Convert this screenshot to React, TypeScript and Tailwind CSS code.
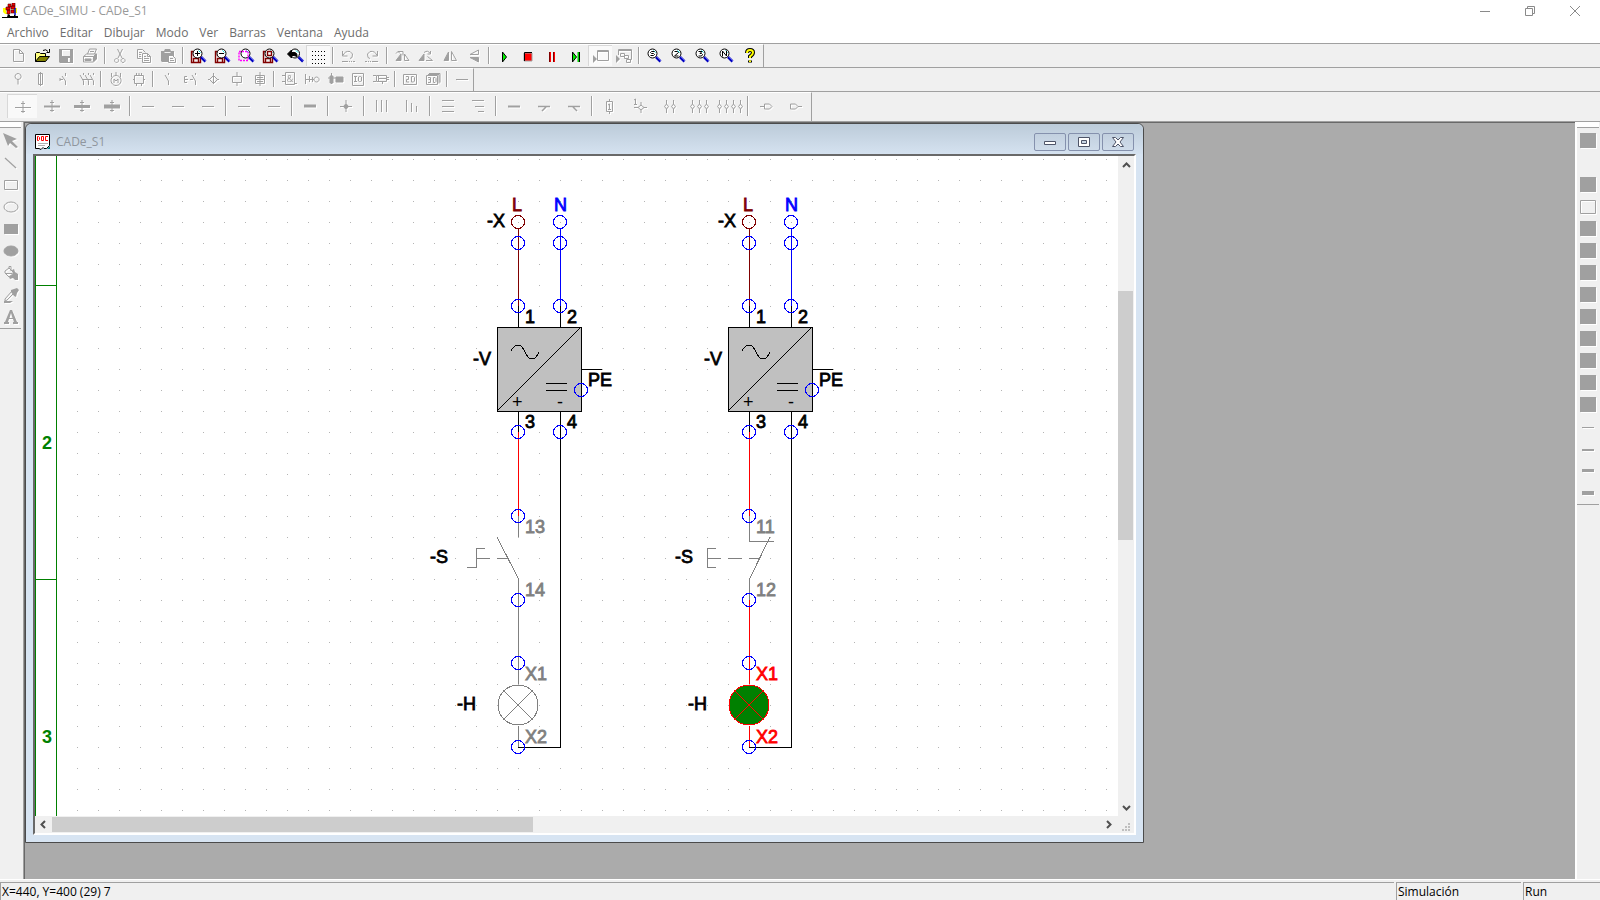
import type { ReactNode } from 'react';
import clsx from 'clsx';

const GREY = '#a0a0a0';

type Tool = { name: string; icon?: ReactNode; active?: boolean; color?: boolean };

const Lens = ({ cx = 7.5, children }: { cx?: number; children?: ReactNode }) => (
   <>
      <path d={`M${cx + 3.5} 9l4.5 4.5`} stroke="#0000c0" strokeWidth="2.6" />
      <path d={`M${cx + 4.5} 9l4 4`} stroke="#8080ff" strokeWidth="0.7" />
      <circle cx={cx} cy="5.5" r="4.5" stroke="#000" fill="#fff" />
      <path d={`M${cx + 1} 2.5l2 2`} stroke="#00e0e0" />
      {children}
   </>
);

// the lens with a sheet mark or number inside
const LensMark = ({ d }: { d: string }) => (
   <Lens cx={6.5}>
      <path d={d} stroke="#000" />
   </Lens>
);

const MaroonPage = () => (
   <path d="M1.5 3.5v11h9v-11zM3.5 14.5v-4h5v4M3.5 3.5v4h6" stroke="#800000" strokeWidth="1.4" fill="#fff" />
);

const fileTools: Tool[][] = [
   [
      { name: 'Nuevo', icon: <path d="M3.5 1.5h6l4 4v8h-10zM9.5 1.5v4h4" /> },
      { name: 'Abrir', color: true, icon: <>
         <path d="M1.5 13.5V5.5l1-1h3l1 1h5v3" fill="#ffff80" stroke="#000" />
         <path d="M1.500 13.500l4-5h10l-4 5z" fill="#808000" stroke="#000" />
         <path d="M9 2.500q3-2 5 1M15.500 1v3.500h-3" stroke="#000" />
      </> },
      { name: 'Guardar', icon: <path d="M1 1h14v14H2l-1-1zM4 2v6h8V2zM10 10v4h2v-4z" fill={GREY} fillRule="evenodd" stroke="none" /> },
      { name: 'Imprimir', icon: <>
         <path d="M5.5 6l2-5h7l-2 5M8 3.5h4M1.5 8.5l3-2.5h10v5l-3 3h-10zM1.5 8.5h10v5M11.5 8.5l3-2.5" />
         <path d="M3 11h6v1.500H3zM12 8l2-2v5l-2 2z" fill={GREY} />
      </> },
   ],
   [
      { name: 'Cortar', icon: <path d="M5.500 1l4.500 9M10.500 1L6 10M4.500 10.500a2 2 0 1 0 .1 0zM11 10.500a2 2 0 1 0 .1 0z" /> },
      { name: 'Copiar', icon: <>
         <path d="M1.500 1.500h5l3 3M1.500 1.500v9h4M3 4.500h3M3 6.500h2M3 8.500h2" />
         <path d="M6.500 5.500h5l3 3v6h-8zM11.500 5.500v3h3M8 8.500h2M8 10.500h5M8 12.500h5" />
      </> },
      { name: 'Pegar', icon: <>
         <path d="M1 3h3l1-2h5l1 2h3v5H8v6H2l-1-1z" fill={GREY} stroke="none" />
         <path d="M4.500 4.500h6" stroke="#f0f0f0" />
         <path d="M8.500 7.500h4l3 3v4h-7zM10 10.500h3M10 12.500h4" />
      </> },
   ],
   [
      { name: 'Aumentar', color: true, icon: <><MaroonPage /><Lens><path d="M5 5.500h5M7.500 3v5" stroke="#000" /></Lens></> },
      { name: 'Reducir', color: true, icon: <><MaroonPage /><Lens><path d="M5 5.500h5" stroke="#000" /></Lens></> },
      { name: 'Zoom ventana', color: true, icon: <><Lens /><path d="M1 3.500h9v9H1z" stroke="#ff00ff" strokeWidth="1.400" strokeDasharray="2 1" /></> },
      { name: 'Zoom página', color: true, icon: <><MaroonPage /><Lens><path d="M5.500 3.500h4v4h-4z" stroke="#800000" strokeWidth="1.400" /></Lens></> },
      { name: 'Zoom anterior', color: true, icon: <><Lens cx={9} /><path d="M1.500 6l4-4v2.500q6-1 5.500 4L8 7.500H5.500V10z" fill="#000" stroke="#000" /></> },
      { name: 'Rejilla', color: true, active: true, icon: <path d="M1 3.500h15M1 7.500h15M1 11.500h15M1 15.500h15" stroke="#000" strokeDasharray="1 2" /> },
   ],
   [
      { name: 'Deshacer', icon: <path d="M2.500 3v5h5M3 7.500q2-5 7-4q4 2 2 6l-2 1M2 13.500h6M9 13.500h1M11 13.500h1M13 13.500h2" /> },
      { name: 'Rehacer', icon: <path d="M13.500 3v5h-5M13 7.500q-2-5-7-4q-4 2-2 6l2 1M14 13.500H8M7 13.500H6M5 13.500H4M3 13.500H1" /> },
   ],
   [
      { name: 'Girar izquierda', icon: <><path d="M2 12.500h5V6z" fill={GREY} /><path d="M10.500 12.500V6l4.500 6.500zM4 3.500h5v4M2 5.500l2-2 2 2" /></> },
      { name: 'Girar derecha', icon: <><path d="M1 12.500h5V6z" fill={GREY} /><path d="M8 12.500h6.500l-5-4M6 4.500q4-3 6 1M12.500 3v3h-3" /></> },
      { name: 'Espejo horizontal', icon: <><path d="M2 12.500h4.500V4z" fill={GREY} /><path d="M9.500 3.500v9h5z" /></> },
      { name: 'Espejo vertical', icon: <><path d="M12.500 2v4.500H4z" /><path d="M12.500 14V9.500H4z" fill={GREY} /></> },
   ],
   [
      { name: 'Simular', color: true, icon: <path d="M6.500 4v10l4-5z" fill="#00f000" stroke="#000" /> },
      { name: 'Parar', color: true, icon: <><path d="M4 5h8v8H4z" fill="#f00" /><path d="M4.500 13V4.500H12" stroke="#000" /></> },
      { name: 'Pausa', color: true, icon: <><path d="M6 4v10M10 4v10" stroke="#800000" strokeWidth="2" /><path d="M6.500 4v10M10.500 4v10" stroke="#f00" /></> },
      { name: 'Paso', color: true, icon: <><path d="M4.500 4v10l4-5z" fill="#00f000" stroke="#000" /><path d="M10.500 4v10" stroke="#00d000" strokeWidth="2" /><path d="M11.500 4v10" stroke="#000" /></> },
      { name: 'Ventana de simulación', active: true, icon: <><path d="M4.500 2.500h11v10h-11zM4 3.500h12" /><path d="M0 7v8l4-4z" fill={GREY} stroke="none" /></> },
      { name: 'Ventanas de simulación', icon: <><path d="M2.500 7V1.500h13v10h-4M2 2.500h14M4.500 5.500h4v3h-4zM8.500 7.500h4v3h-4zM10.500 11.500h4v3h-4z" /><path d="M0 7v8l4-4z" fill={GREY} stroke="none" /></> },
   ],
   [
      { name: 'Zoom S', color: true, icon: <LensMark d="M8.500 3.500h-3l-1 1 1 1h2l1 1-1 1H4.500" /> },
      { name: 'Zoom 2', color: true, icon: <LensMark d="M4.500 3.500h3l1 1-4 3.500h4" /> },
      { name: 'Zoom 3', color: true, icon: <LensMark d="M4.500 3.500h3.500l-2 2h1.500l1 1-1 1.500h-3" /> },
      { name: 'Zoom N', color: true, icon: <LensMark d="M4.500 8.500v-5.500l4 5v-5.500" /> },
      { name: 'Ayuda', color: true, icon: <>
         <path d="M5 5q0-3 3-3t3 2.500q0 2-3 4V10M8 12.500v2" stroke="#000" strokeWidth="4" />
         <path d="M5 5q0-3 3-3t3 2.500q0 2-3 4V10M8 12.500v1.500" stroke="#ff0" strokeWidth="2" />
      </> },
   ],
];

const partTools: Tool[][] = [
   [
      { name: 'Alimentación', icon: <path d="M8 2.500a3 3 0 1 0 .1 0zM8 8.500v5" /> },
      { name: 'Fusibles', icon: <path d="M5.500 2.500h4v11h-4zM7.500 1v14" /> },
      { name: 'Seccionadores', icon: <path d="M9.500 2v3M9.500 14v-4L6 5M4 8.500h3M4 7v3" /> },
      { name: 'Interruptores', icon: <path d="M4.500 14v-4L1 4M9.500 14v-4L6 4M14.500 14v-4L11 4M4.500 2v2M9.500 2v2M14.500 2v2M3 8.500h10" /> },
   ],
   [
      { name: 'Motores', icon: <><path d="M8 4.500a5 5 0 1 0 .1 0zM3.500 2v4M8 1v3M12.500 2v4" /><path d="M6 12V8l2 2 2-2v4" /></> },
      { name: 'Electrónica', icon: <path d="M3.500 4.500h9v8h-9zM5.500 2v2M8 2v2M10.500 2v2M5.500 13v2M10.500 13v2M2 8.500h2M12 8.500h2" /> },
   ],
   [
      { name: 'Contactos', icon: <path d="M8.500 2v2M8.500 14v-4L5 4" /> },
      { name: 'Pulsadores', icon: <path d="M12.500 2v2M12.500 14v-4L9 4M4 5.500H1.500v6H4M1 8.500h4M7 8.500h3" /> },
      { name: 'Detectores', icon: <path d="M7.500 4.500l4 4-4 4-4-4zM7.500 2v11M4 8.500H2M11 8.500h2" /> },
      { name: 'Bobinas', icon: <path d="M3.500 5.500h9v6h-9zM8 1v4M8 12v3" /> },
      { name: 'Señalización', icon: <path d="M3.500 4.500h9v8h-9zM8 1v14M5 6.500h6M5 10.500h6M3 8.500h10" /> },
   ],
   [
      { name: 'Lógica', icon: <><path d="M4.500 1.500h9v12h-9zM1 4.500h3M1 10.500h3M14 12.500h2" /><text x="9" y="11" fontSize="9" textAnchor="middle" fill={GREY} stroke="none">&amp;</text></> },
      { name: 'Neumática', icon: <path d="M1.500 3v10M5.500 5v6M1 8.500h9M8.500 6v5M12.500 6a2.500 2.500 0 1 0 .1 0z" /> },
      { name: 'Conectores', icon: <><path d="M1 7h14M4.500 2v11" /><path d="M3 5h3v7H3zM9 6h7v5H9z" fill={GREY} /></> },
      { name: 'Entradas y salidas', icon: <><path d="M2.500 2.500h11v12h-11z" /><path d="M4 5.500h3M5.500 5.500v5M4 10.500h3M8.500 6v4l1 .5h1l1-.5V6l-1-.5h-1z" /></> },
      { name: 'Cables', icon: <path d="M3.500 4.500h10v6h-10zM5.500 4v7M0 4.500h3M0 10.500h3M13 6.500h3M13 8.500h3M6 7.500h7M9.500 11v2" /> },
   ],
   [
      { name: 'Vista 2D', icon: <><path d="M1.500 3.500h13v10h-13z" /><path d="M4 5.500h2.500v3H4.500v2.500H7M9.500 5.500v5.500h2l1-1V6.500l-1-1z" /></> },
      { name: 'Vista 3D', icon: <><path d="M1.500 4.500h11v9h-11zM3 3.500h11v9M4 2.500h11v9" /><path d="M3 6.500h2.500v5H3M3.500 8.500h2M8.500 6.500v5h1.500l1-1v-3l-1-1z" /></> },
   ],
   [{ name: 'Hilo', icon: <path d="M2 8.500h12" /> }],
];

const crossing = (w: number) => (
   <>
      <path d="M0 8.500h16" strokeWidth={w} />
      <path d="M8 2v12M6 4.500h4M6 12.500h4" />
   </>
);
const thin = <path d="M2 8.500h12" />;
// small terminals drawn side by side
const terminals = (xs: number[]) => (
   <>{xs.map((x) => <path key={x} d={`M${x} 2v4l-2 2.500 2 2.500v4M${x} 6l2 2.500-2 2.500`} />)}</>
);

const wireTools: Tool[][] = [
   [
      { name: 'Cruce 1', active: true, icon: crossing(1) },
      { name: 'Cruce 2', icon: crossing(2) },
      { name: 'Cruce 3', icon: crossing(3) },
      { name: 'Cruce 4', icon: crossing(4) },
   ],
   [{ name: 'Fase 1', icon: thin }, { name: 'Fase 2', icon: thin }, { name: 'Fase 3', icon: thin }],
   [{ name: 'Neutro', icon: thin }, { name: 'Tierra', icon: thin }],
   [{ name: 'Barra', icon: <path d="M2 8h12" strokeWidth="3" /> }],
   [{ name: 'Unión', icon: <><path d="M2 8.500h12M8 2v12" /><circle cx="8" cy="8.500" r="2" fill={GREY} /></> }],
   [
      { name: 'Líneas verticales', icon: <path d="M2.500 2v12M7.500 2v12M12.500 2v12" /> },
      { name: 'Líneas verticales cortas', icon: <path d="M2.500 2v12M7.500 5v9M12.500 8v6" /> },
   ],
   [
      { name: 'Líneas horizontales', icon: <path d="M2 2.500h12M2 8.500h12M2 13.500h12" /> },
      { name: 'Líneas horizontales cortas', icon: <path d="M2 2.500h12M5 8.500h9M8 13.500h6" /> },
   ],
   [
      { name: 'Línea', icon: <path d="M2 8.500h12" strokeWidth="2" /> },
      { name: 'Derivación izquierda', icon: <path d="M2 8.500h12M10 9l-4 4" strokeWidth="1.500" /> },
      { name: 'Derivación derecha', icon: <path d="M2 8.500h12M7 9l4 4" strokeWidth="1.500" /> },
   ],
   [
      { name: 'Número de hilo', icon: <path d="M4.500 3.500h6v10h-6zM7.500 1v3M7.500 13v3M6 11.500h3M7.500 11V6L6 7" /> },
      { name: 'Borne', icon: <path d="M2 9.500h4l3-2.500 3 2.500-3 2.500-3-2.500M12 9.500h3M9 4v3M9 12v3M3.500 1v5M2 6.500h3M3.500 1L2 2" /> },
      { name: 'Bornes 2', icon: terminals([4.500, 11.500]) },
      { name: 'Bornes 3', icon: terminals([0.500, 7.500, 14.500]) },
      { name: 'Bornes 4', icon: terminals([-2.500, 4.500, 11.500, 18.500]) },
   ],
   [
      { name: 'Salida', icon: <path d="M2 8.500h4M6.500 6v5h5l2.500-2.500L11.500 6z" /> },
      { name: 'Entrada', icon: <path d="M2.500 6v5h5L10 8.500 7.500 6zM10 8.500h4" /> },
   ],
];

const drawTools: Tool[] = [
   { name: 'Seleccionar', icon: <path d="M0 0l14 6-5 2 6 6-2 1-6-5-2 3z" fill={GREY} stroke="none" /> },
   { name: 'Recta', icon: <path d="M2 3l11 10" strokeWidth="1.300" /> },
   { name: 'Rectángulo', icon: <path d="M1.500 3.500h13v9h-13z" /> },
   { name: 'Elipse', icon: <ellipse cx="8" cy="8" rx="7" ry="5" /> },
   { name: 'Rectángulo relleno', icon: <path d="M1 3h14v10H1z" fill={GREY} stroke="none" /> },
   { name: 'Elipse rellena', icon: <ellipse cx="8" cy="8" rx="7" ry="5" fill={GREY} /> },
   { name: 'Rellenar', icon: <>
      <path d="M2 6l4-3 5 5-5 4-4-4zM6 3V1.500h2V6M2.500 8.500h7" />
      <path d="M9 5l2-1 1 3 3 2v6h-3l-2-2-3 1-1-2 4-3z" fill={GREY} stroke="none" />
   </> },
   { name: 'Capturar color', icon: <><path d="M2 14l2-1 7-7-2-2-7 8z" /><path d="M8 3l3-1 3-1 2 2-2 3-1 4-2-1-3-4zM1 14h9l-3 2H1z" fill={GREY} stroke="none" /></> },
   { name: 'Texto', icon: <path d="M7 1h2l5 12h1v2h-5v-2h1l-1-3H6l-1 3h1v2H1v-2h1zM6.500 9h3L8 4z" fill={GREY} stroke="none" fillRule="evenodd" /> },
];

const menus = ['Archivo', 'Editar', 'Dibujar', 'Modo', 'Ver', 'Barras', 'Ventana', 'Ayuda'];

const ToolButton = ({ tool, className }: { tool: Tool; className: string }) => (
   <button
      type="button"
      aria-label={tool.name}
      className={clsx(
         'flex shrink-0 items-center justify-center',
         tool.active && 'border-t border-l border-[#d8d8d8] bg-[#f9f9f9]',
         className
      )}
   >
      <svg
         width="16"
         height="16"
         viewBox="0 0 16 16"
         fill="none"
         stroke={GREY}
         className={clsx('shrink-0 overflow-visible', !tool.color && 'drop-shadow-[1px_1px_0_#fff]')}
      >
         {tool.icon}
      </svg>
   </button>
);

const ToolRow = ({ groups, className, cell }: { groups: Tool[][]; className: string; cell: string }) => (
   <div className="border-b border-[#a0a0a0]">
      <div role="toolbar" className={clsx('flex w-fit items-stretch border-t border-white', className)}>
         {groups.map((group, i) => (
            <div key={i} className="flex items-stretch">
               {group.map((tool) => <ToolButton key={tool.name} tool={tool} className={cell} />)}
               {i < groups.length - 1 && <div className="mx-[2px] my-[2px] w-[2px] border-l border-[#a0a0a0] bg-white" />}
            </div>
         ))}
      </div>
   </div>
);

const Node = ({ x, y, color = '#0000ff' }: { x: number; y: number; color?: string }) => (
   <circle cx={x} cy={y} r="6.500" stroke={color} />
);

const Label = ({ x, y, color = '#000', children }: { x: number; y: number; color?: string; children: ReactNode }) => (
   <text x={x} y={y} fill={color} stroke={color} strokeWidth="0.8" fontSize="18">{children}</text>
);

// One branch: supply, rectifier, push button and lamp. x is the column of the L wire.
const Branch = ({ x, closed }: { x: number; closed: boolean }) => {
   const n = x + 42;
   const live = closed ? '#ff0000' : '#808080';

   return (
      <g>
         <Label x={x - 6} y={55} color="#800000">L</Label>
         <Label x={n - 6} y={55} color="#0000ff">N</Label>
         <Label x={x - 31} y={71}>-X</Label>
         <path d={`M${x + 0.5} 73v77`} stroke="#800000" />
         <path d={`M${n + 0.5} 73v77`} stroke="#0000ff" />
         <path d={`M${x + 0.5} 150v21M${n + 0.5} 150v21M${x + 0.5} 255v21`} stroke="#000" />

         <rect x={x - 20.5} y="171.500" width="84" height="84" fill="#c0c0c0" stroke="#000" />
         <path d={`M${x - 21} 255l84-84M${x + 63} 213.500h21M${x + 28} 227.500h21M${x + 28} 234.500h21`} stroke="#000" />
         <path d={`M${x - 7} 195q3-6 7-6t7 7t7 7t7-7`} stroke="#000" />
         <text x={x - 6} y={252} fill="#000" fontSize="18">+</text>
         <text x={n - 3} y={252} fill="#000" fontSize="18">-</text>
         <Label x={x + 7} y={167}>1</Label>
         <Label x={n + 7} y={167}>2</Label>
         <Label x={x - 45} y={209}>-V</Label>
         <Label x={x + 70} y={230}>PE</Label>
         <Label x={x + 7} y={272}>3</Label>
         <Label x={n + 7} y={272}>4</Label>

         <path d={`M${x + 0.5} 276v84`} stroke="#ff0000" />
         <path d={`M${n + 0.5} 255v336.500H${x}`} stroke="#000" />

         {closed ? (
            <>
               <path d={`M${x + 0.5} 360v25.500h24M${x + 21} 381l-20.500 42v21`} stroke="#808080" />
               <path d={`M${x - 33} 392.500h-8.500v19h8.500M${x - 42} 402.500h14M${x - 21} 402.500h14M${x} 402.500h11`} stroke="#808080" />
               <Label x={x - 74} y={407}>-S</Label>
            </>
         ) : (
            <>
               <path d={`M${x + 0.5} 360v21M${x - 21} 381l21.500 42v21`} stroke="#808080" />
               <path d={`M${x - 33} 392.500h-8.500v19h-9.500M${x - 42} 402.500h14M${x - 21} 402.500h11`} stroke="#808080" />
               <Label x={x - 88} y={407}>-S</Label>
            </>
         )}
         <Label x={x + 7} y={377} color="#808080">{closed ? '11' : '13'}</Label>
         <Label x={x + 7} y={440} color="#808080">{closed ? '12' : '14'}</Label>

         <path d={`M${x + 0.5} 444v84M${x + 0.5} 570v21`} stroke={live} />
         <circle cx={x} cy="549" r="20" fill={closed ? '#008000' : '#fff'} stroke={live} />
         <path d={`M${x - 15} 534l30 30M${x + 15} 534l-30 30`} stroke={live} />
         <Label x={x + 7} y={524} color={live}>X1</Label>
         <Label x={x + 7} y={587} color={live}>X2</Label>
         <Label x={x - 61} y={554}>-H</Label>

         <Node x={x} y={66} color="#800000" />
         <Node x={n} y={66} />
         {[87, 150, 276].map((y) => <Node key={y} x={x} y={y} />)}
         {[87, 150, 276].map((y) => <Node key={y} x={n} y={y} />)}
         <Node x={x + 63} y={234} />
         {[360, 444, 507, 591].map((y) => <Node key={y} x={x} y={y} />)}
      </g>
   );
};

const Schematic = () => (
   <svg
      width="100%"
      height="660"
      fill="none"
      shapeRendering="crispEdges"
      fontFamily="'Liberation Sans', sans-serif"
      className="block min-w-0 flex-1 bg-white"
   >
      <defs>
         <pattern id="dots" width="21" height="21" patternUnits="userSpaceOnUse">
            <rect x="0" y="3" width="1" height="1" fill="#b4b4b4" />
         </pattern>
      </defs>
      <rect x="23" width="100%" height="660" fill="url(#dots)" />
      <path d="M0.500 0v660M21.500 0v660M0 129.500h21M0 423.500h21" stroke="#008000" />
      <text x="7" y="293" fontSize="18" fontWeight="bold" fill="#008000">2</text>
      <text x="7" y="587" fontSize="18" fontWeight="bold" fill="#008000">3</text>
      <Branch x={483} closed={false} />
      <Branch x={714} closed />
   </svg>
);

const Arrow = ({ name, d }: { name: string; d: string }) => (
   <button type="button" aria-label={name} className="flex size-4 shrink-0 items-center justify-center">
      <svg width="9" height="9" viewBox="0 0 9 9" fill="none" stroke="#505050" strokeWidth="2"><path d={d} /></svg>
   </button>
);

const FrameButton = ({ name, children }: { name: string; children: ReactNode }) => (
   <button type="button" aria-label={name} className="flex h-[18px] w-8 items-center justify-center rounded-xs border border-[#8591ad] bg-linear-to-b from-[#c2d0df] to-[#cfdcea]">
      <svg width="12" height="12" viewBox="0 0 12 12" fill="#fff" stroke="#4e5468">{children}</svg>
   </button>
);

const DocumentWindow = () => (
   <section className="w-[1119px] rounded-t-md border border-[#4b4b4b] bg-[#d7e4f2]">
      <header className="flex h-[30px] items-center gap-[5px] rounded-t-md bg-linear-to-b from-[#bccbd9] to-[#d5e2f0] px-[9px] pt-[6px]">
         <svg width="16" height="16" viewBox="0 0 16 16">
            <path d="M.5.500h14v11l-3 3H9l-1-1-2 2-2-1H.5z" fill="#fff" stroke="#000" />
            <path d="M3 9.500h10M3 11.500h7" stroke="#b0b0b0" />
            <path d="M12 15l3-3v3z" fill="#008080" />
            <path d="M2.500 2.500v4h1l1-1v-2l-1-1zM6.500 2.500v4h2v-4zM13 2.500h-2.500v4H13" fill="none" stroke="#f00" />
         </svg>
         <h2 className="flex-1 text-xs text-[#8f969e]">CADe_S1</h2>
         <div className="flex gap-[2px]">
            <FrameButton name="Minimizar documento"><path d="M.5 5.500h11v3H.5z" /></FrameButton>
            <FrameButton name="Restaurar documento"><path d="M.5 1.500h11v9H.5zM3.500 4.500h5v3h-5z" fillRule="evenodd" /></FrameButton>
            <FrameButton name="Cerrar documento"><path d="M.5 1.500h3L6 4l2.500-2.500h3L8 6l3.500 4.500h-3L6 8l-2.500 2.500h-3L4 6z" /></FrameButton>
         </div>
      </header>
      <div className="mx-[7px] mb-[7px] border-2 border-t-[#696969] border-r-white border-b-white border-l-[#696969] bg-[#f0f0f0]">
         <div className="flex">
            <Schematic />
            <div className="flex w-4 flex-col items-center">
               <Arrow name="Subir" d="M1 7l3.500-3.500L8 7" />
               <div className="min-h-0 flex-1 self-stretch pt-[119px] pr-px">
                  <div className="h-[249px] bg-[#cdcdcd]" />
               </div>
               <Arrow name="Bajar" d="M1 2l3.500 3.500L8 2" />
            </div>
         </div>
         <div className="flex h-[17px] items-center">
            <Arrow name="Izquierda" d="M6 1L2.500 4.500 6 8" />
            <div className="min-w-0 flex-1 pl-px">
               <div className="h-[15px] w-[481px] bg-[#cdcdcd]" />
            </div>
            <Arrow name="Derecha" d="M1 1l3.500 3.500L1 8" />
            <svg width="16" height="16" fill="#bfbfbf" className="shrink-0">
               <path d="M10 6h2v2h-2zM10 9h2v2h-2zM10 12h2v2h-2zM7 9h2v2H7zM7 12h2v2H7zM4 12h2v2H4z" />
            </svg>
         </div>
      </div>
   </section>
);

const swatches: Tool[] = Array.from({ length: 17 }, (_, i) => {
   if (i === 1) return { name: 'Sin color' };
   if (i === 3) return { name: 'Color 3', icon: <path d="M.5 1.500h15v13H.5z" /> };
   if (i > 12) return { name: `Grosor ${i - 12}`, icon: <path d={`M2 ${i > 14 ? 6 : 8}h12v${i - 12}H2z`} fill={GREY} stroke="none" /> };
   return { name: `Color ${i}`, icon: <path d="M0 0h16v15H0z" fill={GREY} stroke="none" /> };
});

const SideBar = ({ tools, className }: { tools: Tool[]; className: string }) => (
   <aside className={clsx('shrink-0', className)}>
      <div role="toolbar" className="flex flex-col border-b border-[#a0a0a0]">
         <div className="mb-[2px] h-[6px] border-b border-[#a0a0a0] bg-white" />
         {tools.map((tool) => <ToolButton key={tool.name} tool={tool} className="h-[22px]" />)}
      </div>
   </aside>
);

const App = () => {
   return (
      <div className="flex min-h-screen flex-col bg-[#f0f0f0] font-['Open_Sans',sans-serif] text-xs text-black">
         <header className="bg-white">
            <div className="flex h-[22px] items-center gap-1 pl-[2px]">
               <svg width="17" height="16" viewBox="0 0 17 16">
                  <path d="M1 5h3v4l2 2H3l-2-2zM11 5h4v5h-4z" fill="#ff0" />
                  <path d="M6 1h3v3H6zM10 0h3v3h-3zM4 4h4v3H4zM9 3h4v3H9zM5 7h3v4H5zM9 7h3v3H9z" fill="#f00000" stroke="#500" strokeWidth="0.600" />
                  <path d="M13 5v7" stroke="#0000c0" strokeWidth="1.500" />
                  <path d="M0 14h5l1-3 2 1h5l1 1h2v2H0z" fill="#000" />
                  <path d="M8 11h4v2H8z" fill="#fff" />
               </svg>
               <h1 className="flex-1 text-[#999]">CADe_SIMU - CADe_S1</h1>
               <div className="flex pr-[2px] text-[#8a8a8a]">
                  <button type="button" aria-label="Minimizar" className="flex w-[45px] justify-center">
                     <svg width="10" height="10" stroke="currentColor"><path d="M0 5.500h10" /></svg>
                  </button>
                  <button type="button" aria-label="Restaurar" className="flex w-[45px] justify-center">
                     <svg width="10" height="10" fill="none" stroke="currentColor"><path d="M.5 2.500h7v7h-7zM2.500 2V.5h7v7H8" /></svg>
                  </button>
                  <button type="button" aria-label="Cerrar" className="flex w-[46px] justify-center">
                     <svg width="10" height="10" stroke="currentColor"><path d="M0 0l10 10M10 0L0 10" /></svg>
                  </button>
               </div>
            </div>
            <nav className="flex h-[21px] gap-[11px] pl-[7px] text-[#6d6d6d]">
               {menus.map((menu) => <button key={menu} type="button">{menu}</button>)}
            </nav>
         </header>

         <div className="border-t border-[#a0a0a0]">
            <ToolRow groups={fileTools} className="h-[23px] border-r border-r-[#a0a0a0] pr-px pb-px pl-[6px]" cell="w-6" />
            <ToolRow groups={partTools} className="h-[23px] border-r border-r-[#a0a0a0] pb-[2px] pl-[6px]" cell="w-[23px]" />
            <ToolRow groups={wireTools} className="h-[29px] border-r border-r-[#a0a0a0] pt-px pb-[3px] pl-[7px]" cell="w-[30px]" />
         </div>

         <div className="flex flex-1">
            <SideBar tools={drawTools} className="w-6 border-r border-[#a0a0a0] pr-[2px]" />
            <main className="min-w-0 flex-1 overflow-hidden border-t border-l border-[#696969] bg-[#ababab] pb-[35px]">
               <DocumentWindow />
            </main>
            <SideBar tools={swatches} className="w-[25px] border-l-2 border-white pr-px" />
         </div>

         <footer className="flex h-[21px] shrink-0 gap-[2px] border-t border-white pt-[2px]">
            <div className="flex flex-1 items-center border-t border-l border-[#a0a0a0] pl-[1px]">X=440, Y=400 (29) 7</div>
            <div className="flex w-[125px] items-center border-t border-l border-[#a0a0a0] pl-[1px]">Simulación</div>
            <div className="flex w-[77px] items-center border-t border-l border-[#a0a0a0] pl-[1px]">Run</div>
         </footer>
      </div>
   );
};

export default App;
